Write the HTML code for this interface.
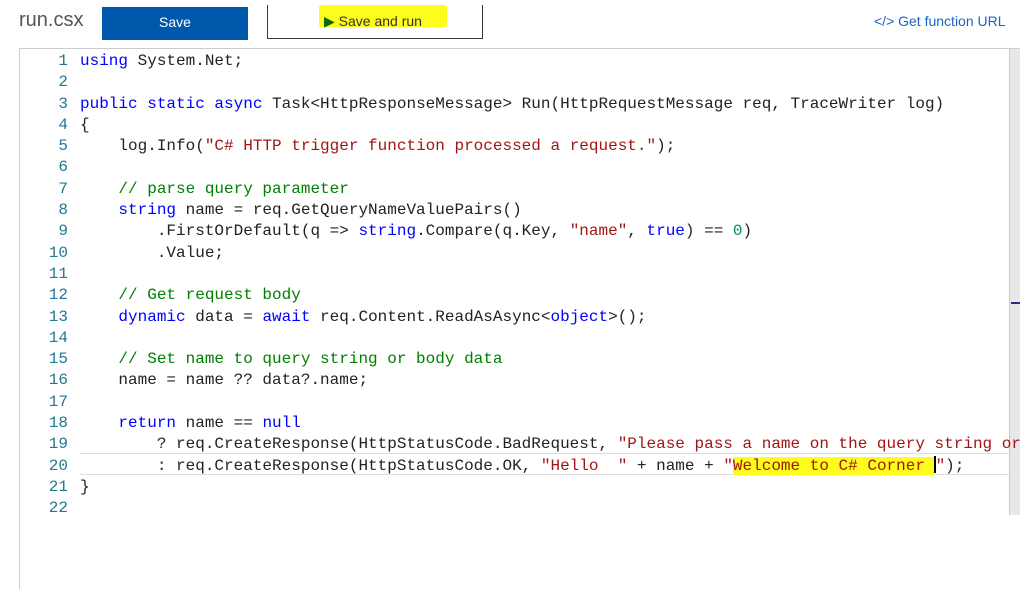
<!DOCTYPE html>
<html><head><meta charset="utf-8"><style>
body{margin:0;width:1020px;height:571px;overflow:hidden;background:#fff;font-family:"Liberation Sans",sans-serif;position:relative}
.t{position:absolute;left:19px;top:9px;font-size:20px;color:#555}
.save{position:absolute;left:102px;top:7px;width:146px;height:33px;background:#0058ad;color:#fff;font-size:14px;text-align:center;line-height:31px}
.sr{position:absolute;left:267px;top:5px;width:216px;height:34px;border:1px solid #3a3a3a;border-top:none;box-sizing:border-box}
.hl{position:absolute;left:319px;top:5px;width:128px;height:22px;background:#fdfd1c;border-radius:3px}
.srt{position:absolute;left:324px;top:13px;font-size:14px;color:#333}
.url{position:absolute;left:874px;top:13px;font-size:14px;color:#1a64c4}
.ed{position:absolute;left:19px;top:48px;width:1010px;height:540px;border-top:1px solid #ccc;border-left:1px solid #ccc}
.sb{position:absolute;left:1009px;top:49px;width:11px;height:466px;background:#e8e8e8;border-left:1px solid #c8c8c8}
.mk{position:absolute;left:1011px;top:302px;width:9px;height:2px;background:#2e2e8a}
.cur{position:absolute;left:80px;top:453px;width:929px;height:20px;border-top:1px solid #ddd;border-bottom:1px solid #ddd}
pre{position:absolute;margin:0;top:51px;font-family:"Liberation Mono",monospace;font-size:16px;line-height:21.3px}
.ln{left:40px;width:28px;text-align:right;color:#237893}
.cd{left:80px;color:#222}
.k{color:#0000ff}.s{color:#a31515}.c{color:#008000}.n{color:#098658}
.y{background:#fdfd1c}
.caret{display:inline-block;width:2px;height:17px;background:#000;vertical-align:-3px;margin-left:-1px}
</style></head><body>
<div class="t">run.csx</div>
<div class="save">Save</div>
<div class="sr"></div>
<div class="hl"></div>
<div class="srt"><span style="color:#0a6b0a">▶</span> Save and run</div>
<div class="url">&lt;/&gt; Get function URL</div>
<div class="ed"></div>
<div class="cur"></div>
<div class="sb"></div><div class="mk"></div>
<pre class="ln">1
2
3
4
5
6
7
8
9
10
11
12
13
14
15
16
17
18
19
20
21
22</pre>
<pre class="cd"><span class="k">using</span> System.Net;

<span class="k">public static async</span> Task&lt;HttpResponseMessage&gt; Run(HttpRequestMessage req, TraceWriter log)
{
    log.Info(<span class="s">"C# HTTP trigger function processed a request."</span>);

    <span class="c">// parse query parameter</span>
    <span class="k">string</span> name = req.GetQueryNameValuePairs()
        .FirstOrDefault(q =&gt; <span class="k">string</span>.Compare(q.Key, <span class="s">"name"</span>, <span class="k">true</span>) == <span class="n">0</span>)
        .Value;

    <span class="c">// Get request body</span>
    <span class="k">dynamic</span> data = <span class="k">await</span> req.Content.ReadAsAsync&lt;<span class="k">object</span>&gt;();

    <span class="c">// Set name to query string or body data</span>
    name = name ?? data?.name;

    <span class="k">return</span> name == <span class="k">null</span>
        ? req.CreateResponse(HttpStatusCode.BadRequest, <span class="s">"Please pass a name on the query string or</span>
        : req.CreateResponse(HttpStatusCode.OK, <span class="s">"Hello  "</span> + name + <span class="s">"<span class="y">Welcome to C# Corner </span><span class="caret"></span>"</span>);
}
</pre>
</body></html>
